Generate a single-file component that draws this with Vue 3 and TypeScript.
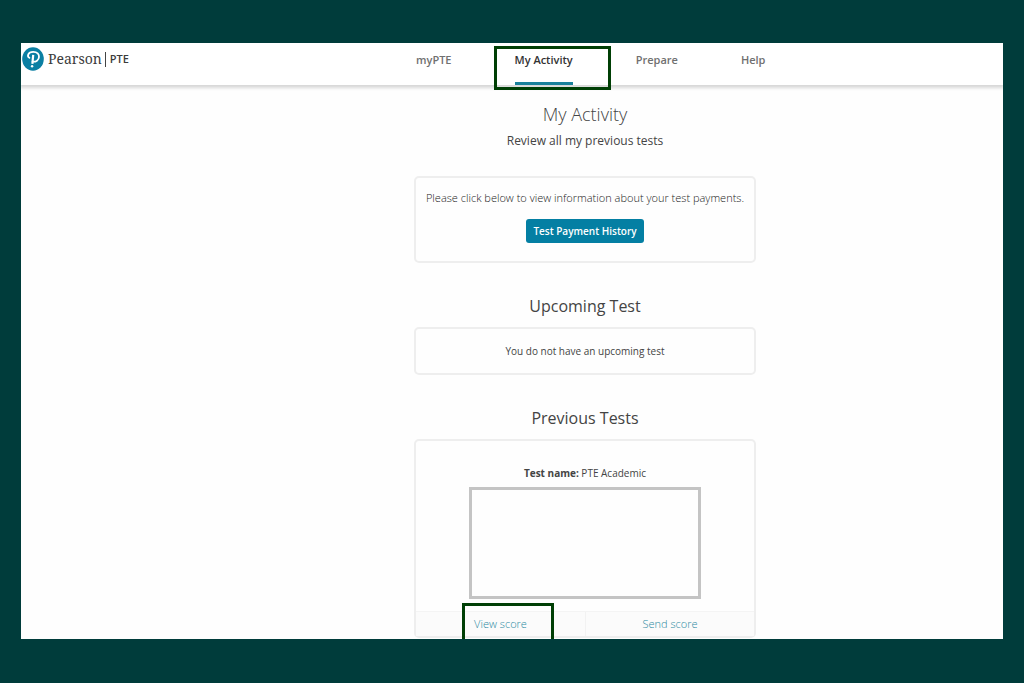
<script setup lang="ts">
interface NavItem {
  label: string
  active: boolean
}

const navItems: NavItem[] = [
  { label: 'myPTE', active: false },
  { label: 'My Activity', active: true },
  { label: 'Prepare', active: false },
  { label: 'Help', active: false },
]
</script>

<template>
  <div class="frame">
    <div class="page">
      <header class="topbar">
        <a class="brand" href="#" aria-label="Pearson PTE">
          <svg class="logo" viewBox="0 0 22 24" aria-hidden="true">
            <ellipse cx="11" cy="12" rx="10.8" ry="11.8" fill="#0b7fa3" />
            <path
              d="M7.4 10.8 C5 9.6 5.6 4.8 11.2 4.8 C15.3 4.8 17.2 7 17 10 C16.8 13.2 14 15 10.6 14.6"
              fill="none"
              stroke="#fff"
              stroke-width="1.8"
              stroke-linecap="round"
            />
            <path d="M11.2 7.8 L10.4 16.8" stroke="#fff" stroke-width="2.2" />
            <circle cx="10.1" cy="19.2" r="1.2" fill="#fff" />
          </svg>
          <span class="name">Pearson</span>
          <span class="bar"></span>
          <span class="product">PTE</span>
        </a>
        <nav class="nav" aria-label="Main">
          <a
            v-for="item in navItems"
            :key="item.label"
            href="#"
            class="nav-link"
            :class="{ active: item.active }"
            :aria-current="item.active ? 'page' : undefined"
          >
            {{ item.label }}
            <span v-if="item.active" class="mark mark-nav"></span>
          </a>
        </nav>
      </header>

      <main class="content">
        <div class="column">
          <h1>My Activity</h1>
          <p class="lead">Review all my previous tests</p>

          <section class="card payments">
            <p>Please click below to view information about your test payments.</p>
            <button type="button">Test Payment History</button>
          </section>

          <h2>Upcoming Test</h2>
          <section class="card upcoming">
            <p>You do not have an upcoming test</p>
          </section>

          <h2>Previous Tests</h2>
          <section class="card previous">
            <p><strong>Test name:</strong> PTE Academic</p>
            <div class="details"></div>
            <div class="actions">
              <div class="action">
                <a href="#">View score</a>
                <span class="mark mark-score"></span>
              </div>
              <div class="action">
                <a href="#">Send score</a>
              </div>
            </div>
          </section>
        </div>
      </main>
    </div>
  </div>
</template>

<style>
body {
  margin: 0;
  background: #003c3b;
}
</style>

<style scoped>
.frame {
  box-sizing: border-box;
  height: 100vh;
  padding: 43px 21px 44px;
  background: #003c3b;
  font-family: "Open Sans", "Noto Sans", sans-serif;
  font-size: 11px;
  line-height: 20px;
  color: #444;
}

.page {
  height: 100%;
  overflow: hidden;
  background: #fefefe;
}

.topbar {
  position: relative;
  display: grid;
  grid-template-columns: 395px 1fr;
  height: 42px;
  background: #fff;
  box-shadow: 0 2px 3px 1px #d8d8d8;
}

.brand {
  display: flex;
  align-items: center;
  height: 24px;
  margin: 4px 0 0 1px;
  color: #3c3c3c;
  text-decoration: none;
}

.logo {
  width: 22px;
  height: 24px;
  margin-right: 4px;
}

.name {
  font-family: "Noto Serif", "Liberation Serif", serif;
  font-size: 14px;
}

.bar {
  width: 1px;
  height: 15px;
  margin: 0 4px 0 3px;
  background: #444;
}

.product {
  font-size: 11px;
  font-weight: 600;
}

.nav {
  display: flex;
  gap: 63px;
}

.nav-link {
  position: relative;
  box-sizing: border-box;
  padding-top: 7px;
  border-bottom: 3px solid transparent;
  color: #707070;
  font-weight: 600;
  text-decoration: none;
  white-space: nowrap;
}

.nav-link.active {
  border-bottom-color: #1a819b;
  color: #333;
}

.mark {
  position: absolute;
  box-sizing: border-box;
  border: 3px solid #003f05;
  pointer-events: none;
}

.mark-nav {
  top: 3px;
  right: -38px;
  bottom: -8px;
  left: -21px;
}

.content {
  padding: 17px 0 0 146px;
}

.column {
  width: 342px;
  margin: 0 auto;
  text-align: center;
}

h1,
h2,
p {
  margin: 0;
}

h1 {
  font-size: 18px;
  font-weight: 300;
  line-height: 24px;
}

.lead {
  margin: 5px 0 25px;
  font-size: 12px;
}

h2 {
  margin: 31px 0 9px;
  font-size: 16px;
  font-weight: 400;
  line-height: 24px;
}

.card {
  box-sizing: border-box;
  border: 2px solid #eee;
  border-radius: 5px;
  background: #fefefe;
}

.payments {
  padding: 10px 0 18px;
  white-space: nowrap;
}

.payments p {
  color: #222;
  font-weight: 300;
}

.payments button {
  height: 24px;
  margin-top: 11px;
  padding: 0 7px;
  border: 0;
  border-radius: 3px;
  background: #047fa3;
  color: #fff;
  font: inherit;
  font-size: 10px;
  font-weight: 600;
  vertical-align: top;
}

.upcoming {
  padding: 12px 0;
  font-size: 10px;
}

.previous {
  padding-top: 22px;
  font-size: 10px;
}

.details {
  box-sizing: border-box;
  width: 232px;
  height: 112px;
  margin: 4px auto 12px;
  border: 3px solid #c4c4c4;
}

.actions {
  display: grid;
  grid-template-columns: 1fr 1fr;
  border-top: 1px solid #f4f4f4;
  background: #fbfbfb;
}

.action {
  position: relative;
  padding: 2px 0;
}

.action + .action {
  border-left: 1px solid #f2f2f2;
}

.action a {
  color: #2a8aa2;
  font-size: 11px;
  font-weight: 300;
  text-decoration: none;
}

.mark-score {
  top: -9px;
  right: 31px;
  bottom: -12px;
  left: 46px;
}
</style>
